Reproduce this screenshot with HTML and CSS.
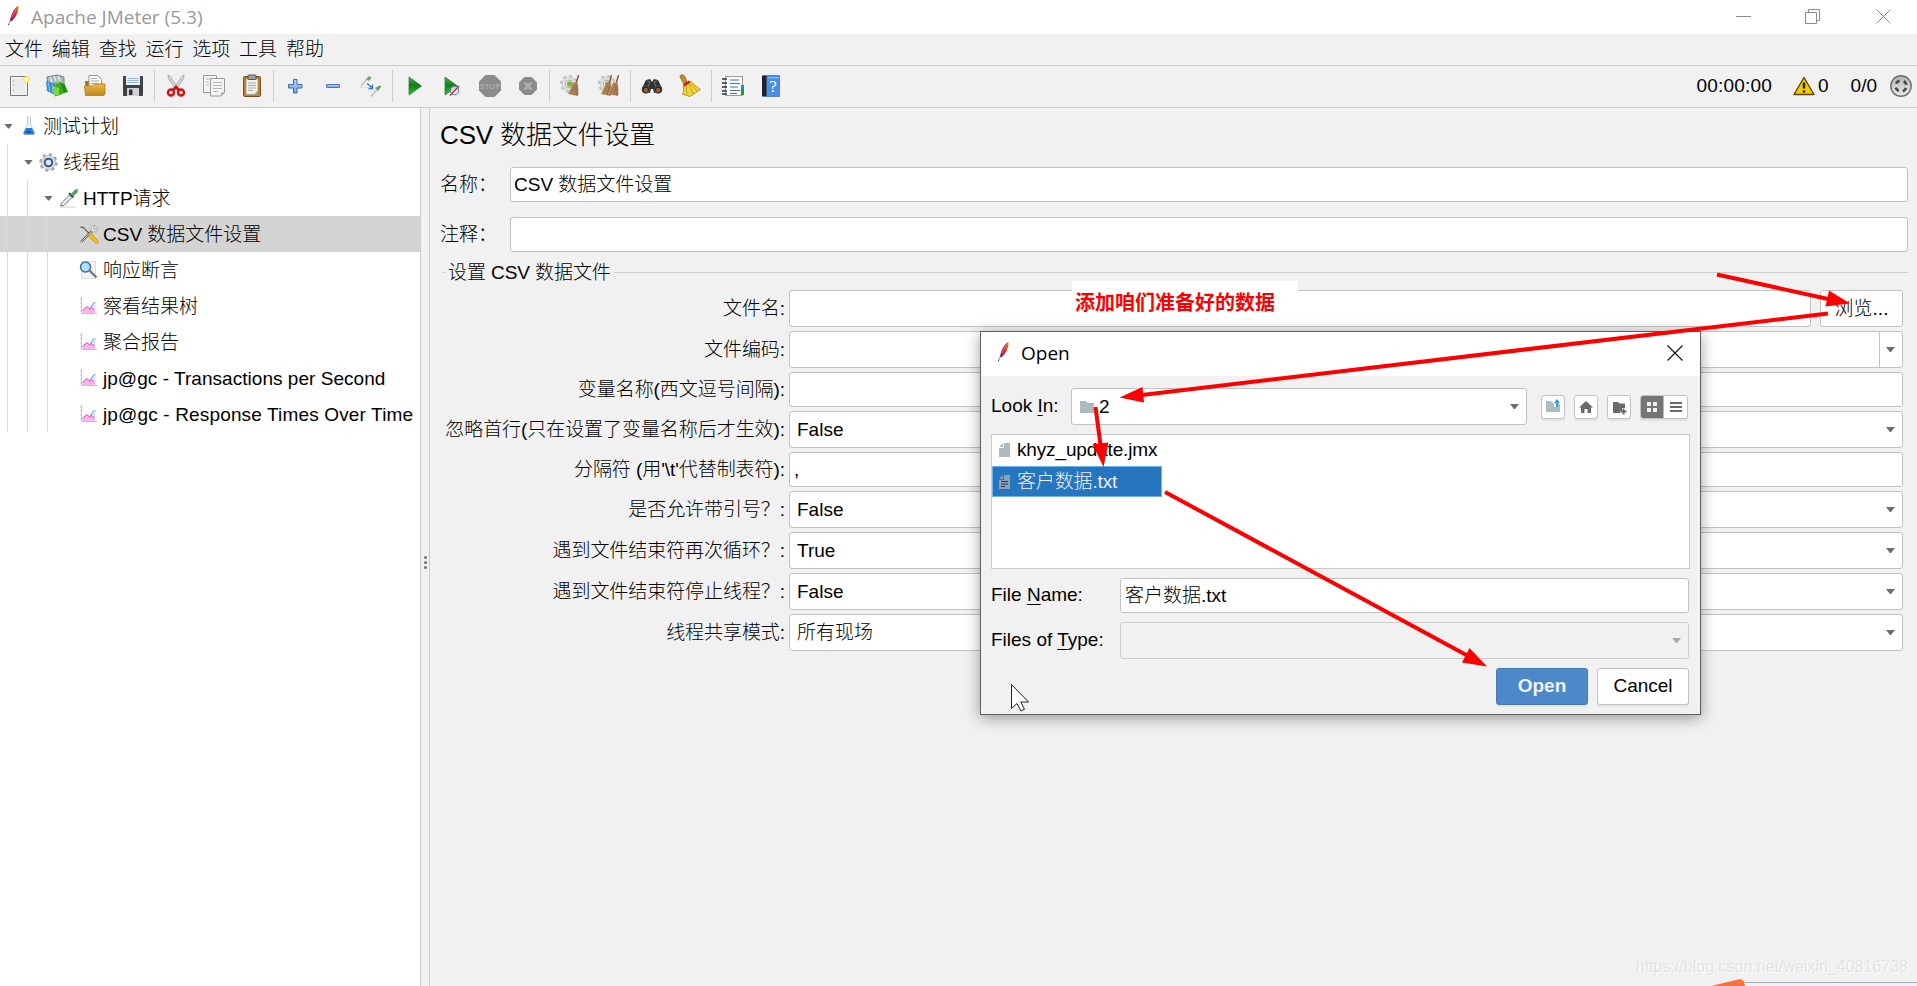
FILE: index.html
```html
<!DOCTYPE html>
<html lang="zh-CN">
<head>
<meta charset="utf-8">
<title>Apache JMeter (5.3)</title>
<link rel="stylesheet" href="styles.css">
</head>
<body>
<svg class="defs" width="0" height="0">
  <defs>
    <linearGradient id="gFeather" x1="1" y1="0" x2="0" y2="1"><stop offset="0" stop-color="#f7a41d"/><stop offset=".25" stop-color="#e8542a"/><stop offset=".5" stop-color="#c9203c"/><stop offset="1" stop-color="#7a2a80"/></linearGradient>
    <linearGradient id="gGreen" x1="0" y1="0" x2="0" y2="1"><stop offset="0" stop-color="#4fae55"/><stop offset=".45" stop-color="#167c1c"/><stop offset="1" stop-color="#18d018"/></linearGradient>
    <linearGradient id="gBlue" x1="0" y1="0" x2="0" y2="1"><stop offset="0" stop-color="#b6d2f2"/><stop offset="1" stop-color="#7aa6de"/></linearGradient>
    <linearGradient id="gGold" x1="0" y1="0" x2="0" y2="1"><stop offset="0" stop-color="#e9b84a"/><stop offset="1" stop-color="#c08818"/></linearGradient>
    <linearGradient id="gBall" x1="0" y1="0" x2="0" y2="1"><stop offset="0" stop-color="#b4b4b4"/><stop offset="1" stop-color="#e8e8e8"/></linearGradient>
    <symbol id="feather" viewBox="0 0 14 22"><path d="M11.500 0.500C8 2 4.500 8 3 15L4.500 16.500C8.500 12.500 12 7 11.500 0.500Z" fill="url(#gFeather)"/><path d="M3.400 15.500L.8 21" stroke="#6b2a6e" stroke-width="1" stroke-dasharray="2 1" fill="none"/><path d="M5 12l2-4 2-3" stroke="#f0a0a0" stroke-width=".6" fill="none"/></symbol>
    <symbol id="chart" viewBox="0 0 20 20"><path d="M2.500 1v16.500H18" stroke="#c4c4c4" fill="none"/><path d="M1 3h2M1 7h2M1 11h2M1 15h2" stroke="#c8c8c8"/><path d="M9 12c3 0 2-6 7.500-6V16H9z" fill="#d4e4fa"/><path d="M11 12c3-1 1-5 5.500-5.500" stroke="#7ba6e0" fill="none"/><path d="M3.500 17v-2.500L8 10.500l3.500 3.500 4.500-2v5z" fill="#f9b4f0"/><path d="M3.500 14.500L8 10.500l3 3 1.500-2 2.500 2.500" stroke="#c05a92" fill="none"/></symbol>
    <symbol id="gearclean" viewBox="0 0 24 24"><circle cx="10" cy="10" r="7.800" fill="none" stroke="#bfc3c1" stroke-width="2.600" stroke-dasharray="3.060 3.060"/><circle cx="10" cy="10" r="7" fill="#dfe2e0" stroke="#b8bcba" stroke-width=".6"/><circle cx="10" cy="10" r="3.800" fill="#f0f2ee" stroke="#999" stroke-width=".8"/><circle cx="10.500" cy="10" r="2.600" fill="#76b62c"/></symbol>
    <symbol id="brush" viewBox="0 0 12 22"><path d="M10.500 0L8 9" stroke="#8b5a36" stroke-width="1.500"/><path d="M5.500 7l4.500 1.500L10.500 20l-1 1L0 19z" fill="#b58a5e"/><path d="M7 9L3 19M8.500 10L6 20M9.500 12L8.500 20" stroke="#7d5430" stroke-width=".7"/></symbol>
  </defs>
</svg>

<div class="window">
  <header class="titlebar">
    <svg class="app-icon" width="14" height="22"><use href="#feather"/></svg>
    <span class="app-title">Apache JMeter (5.3)</span>
    <svg class="win-controls" width="160" height="18" fill="none" stroke="#8c8c8c"><path d="M0 8.500h15"/><path d="M69.500 4.500h11v11h-11zM72.500 4.500v-3h11v11h-3"/><path d="M140.500 1.500l14 14M154.500 1.500l-14 14"/></svg>
  </header>

  <nav class="menubar"><span>文件</span><span>编辑</span><span>查找</span><span>运行</span><span>选项</span><span>工具</span><span>帮助</span></nav>

  <div class="toolbar">
    <span class="tool"><svg viewBox="0 0 24 24"><path d="M3.500 2.500h17v19h-17z" fill="#f4f4f4" stroke="#777"/><path d="M5 4h14v16H5z" fill="#ececec"/><path d="M6.500 6v2M6.500 10v2M6.500 15v2" stroke="#bbb"/><circle cx="19.500" cy="5.500" r="3" fill="#fdf9a0" stroke="#f0e050"/></svg></span>
    <span class="tool"><svg viewBox="0 0 24 24"><path d="M2 3l10-2 7 2v7H3z" fill="#a9b8b8" stroke="#6e8486"/><path d="M5 3l2 5M9 2l2 5M13 2l2 5" stroke="#e8eeee" stroke-width="1.500"/><path d="M1 7l9 3v11l-8-4z" fill="#2b8fd0"/><path d="M3 8l2 9M7 10l1 9" stroke="#86cdf0"/><path d="M8 12l7-4 5 2v9l-10 3.500z" fill="#3fae1c"/><path d="M8 12l6 2v8l-5-1.500z" fill="#7cdb3a"/><path d="M15 9l5 2 3 7-4 1z" fill="#239010"/></svg></span>
    <span class="tool"><svg viewBox="0 0 24 24"><path d="M2 7h7l2 2h9v12H3z" fill="#a87615"/><path d="M6 1.500h9l3.500 4V13H6z" fill="#f7f7f7" stroke="#999"/><path d="M8 4.500h6M8 7h8M8 9.500h8" stroke="#aaa"/><path d="M1.500 12h8l2-2h10.500v10l-1.500 1.500h-18z" fill="url(#gGold)" stroke="#b27f16" stroke-width=".8"/></svg></span>
    <span class="tool"><svg viewBox="0 0 24 24"><rect x="2" y="2" width="20" height="20" rx="1" fill="#3e4246"/><path d="M5 2h14v9H5z" fill="#e8f0f8"/><path d="M6.500 4.500h11M6.500 6.500h11M6.500 8.500h11" stroke="#9db6d0"/><path d="M6 14h12v8H6z" fill="#cfd3d6"/><path d="M8 15.500h3.500V21H8z" fill="#333"/></svg></span>
    <i class="sep"></i>
    <span class="tool"><svg viewBox="0 0 24 24"><path d="M4 1.500c2 0 3 2 3.500 3.500L15 15l-2 1.500L5.500 6C4.500 4.500 4 3 4 1.500zM20 1.500c-2 0-3 2-3.500 3.500L9 15l2 1.500L18.500 6c1-1.500 1.500-3 1.500-4.500z" fill="#e4e6e6" stroke="#888" stroke-width=".8"/><circle cx="7" cy="18.500" r="3" fill="none" stroke="#d01414" stroke-width="2.500"/><circle cx="17" cy="18.500" r="3" fill="none" stroke="#d01414" stroke-width="2.500"/><path d="M9 16l3-3 3 3" fill="none" stroke="#d01414" stroke-width="2.500"/></svg></span>
    <span class="tool"><svg viewBox="0 0 24 24"><g fill="#f4f5f3" stroke="#9a9a98"><path d="M1.500 1.500h13v17h-13z"/><path d="M8.500 4.500h14v14l-3.500 3.500H8.500z"/></g><path d="M4 5h4M4 8h3M4 11h3M11 8.500h9M11 11.500h9M11 14.500h9M11 17.500h5" stroke="#b8bab6"/><path d="M22.500 18.500L19 22v-3.500z" fill="#aaa"/></svg></span>
    <span class="tool"><svg viewBox="0 0 24 24"><rect x="3.500" y="2.500" width="17" height="20" rx="1" fill="#c08224" stroke="#7a5012"/><path d="M6 5h12v15.500H6z" fill="#f1f1ee" stroke="#888" stroke-width=".6"/><rect x="8" y="1" width="8" height="4.500" rx="1" fill="#9c9f9a" stroke="#555"/><path d="M8 9h8M8 11.500h8M8 14h8M8 16.500h5" stroke="#aaa"/><path d="M18 16.500v4h-4z" fill="#999"/></svg></span>
    <i class="sep"></i>
    <span class="tool"><svg viewBox="0 0 24 24"><path d="M10.500 5.500h3.500v5h5v3.500h-5v5h-3.500v-5h-5v-3.500h5z" fill="url(#gBlue)" stroke="#3e6aac"/></svg></span>
    <span class="tool"><svg viewBox="0 0 24 24"><rect x="5.500" y="10.500" width="13" height="3" rx=".5" fill="url(#gBlue)" stroke="#4a74b4"/></svg></span>
    <span class="tool"><svg viewBox="0 0 24 24"><path d="M2 12L8 5" stroke="#c4c4c4" stroke-width="1.800"/><path d="M7 5l3-3 2.500 1.500L10 7z" fill="#6aa564"/><path d="M1 13.500h11" stroke="#ddd"/><path d="M12 22.500l6-7" stroke="#c4c4c4" stroke-width="1.800"/><path d="M16 14l4.500-2.500 2 1L19 17z" fill="#6aa564"/><path d="M8 9.500l5 4M13.500 10.500v4H9.500" stroke="#2f78d0" fill="none" stroke-width="1.300"/></svg></span>
    <i class="sep"></i>
    <span class="tool"><svg viewBox="0 0 24 24"><path d="M7 3l12.500 9L7 21z" fill="url(#gGreen)" stroke="#1d7a22" stroke-width=".7"/></svg></span>
    <span class="tool"><svg viewBox="0 0 24 24"><path d="M5 3l12.500 9L5 21z" fill="url(#gGreen)" stroke="#1d7a22" stroke-width=".7"/><circle cx="14.500" cy="16.500" r="4.300" fill="#dfe8f4" fill-opacity=".8" stroke="#4a7cb8"/><path d="M10 21.500l9-9.500" stroke="#d42020" stroke-width="1.300"/></svg></span>
    <span class="tool"><svg viewBox="0 0 24 24"><path d="M7.500 1h9L23 7.500v9L16.500 23h-9L1 16.500v-9z" fill="#8b8b8b"/><text x="12" y="15" class="stop-text">STOP</text></svg></span>
    <span class="tool"><svg viewBox="0 0 24 24"><path d="M8.500 3h7L21 8.500v7L15.500 21h-7L3 15.500v-7z" fill="#8b8b8b"/><path d="M8.500 8.500l7 7M15.500 8.500l-7 7" stroke="#b0b0b0" stroke-width="2.500"/></svg></span>
    <i class="sep"></i>
    <span class="tool"><svg viewBox="0 0 24 24"><use href="#gearclean" width="24" height="24"/><use href="#brush" x="9" y="1" width="12" height="22"/></svg></span>
    <span class="tool"><svg viewBox="0 0 24 24"><use href="#gearclean" width="24" height="24"/><use href="#brush" x="4" y="1" width="12" height="22"/><use href="#brush" x="11" y="1" width="12" height="22"/></svg></span>
    <i class="sep"></i>
    <span class="tool"><svg viewBox="0 0 24 24"><path d="M6 6l4-1 2 3 2-3 4 1 4 8-1 4-7 1-1-4h-2l-1 4-7-1-1-4z" fill="#2f3133"/><path d="M7 7l3 1-2 5M17 7l-3 1 2 5" stroke="#77797b" fill="none"/><circle cx="5.800" cy="15.500" r="3.800" fill="#222" stroke="#555"/><circle cx="18.200" cy="15.500" r="3.800" fill="#222" stroke="#555"/><circle cx="5.800" cy="16" r="2.200" fill="#a85a22"/><circle cx="18.200" cy="16" r="2.200" fill="#a85a22"/></svg></span>
    <span class="tool"><svg viewBox="0 0 24 24"><path d="M2 3c0-3 4-3 5 0l2 5-3 2z" fill="#c98a2a" stroke="#7c5210" stroke-width=".7"/><path d="M5 12l7-5 10.500 8.500L12 22.500 4 20c2-1 2-4 1-8z" fill="#f0d33a" stroke="#a88a10" stroke-width=".8"/><path d="M8 11l1 9M11 10l4 10M13 10l6 7" stroke="#b59617" stroke-width=".8"/><path d="M5 10.500l6-4 1.500 2-6 4z" fill="#d21a1a"/></svg></span>
    <i class="sep"></i>
    <span class="tool"><svg viewBox="0 0 24 24"><path d="M4.500 2.500h17v19h-17z" fill="#fcfcfc" stroke="#999"/><path d="M20 11h3v5h-3z" fill="#2680e8"/><path d="M20 16h3v5h-3z" fill="#1c9a28"/><path d="M1 5h5M1 9h5M1 13h5M1 17h5M1 20h5" stroke="#333" stroke-width="1.300"/><path d="M9 6h9M9 9.500h10M9 13h8M9 16.500h10M9 19.500h7" stroke="#3a72c4" stroke-width="1.100"/></svg></span>
    <span class="tool"><svg viewBox="0 0 24 24"><path d="M3.500 1.500h17v21h-17z" fill="#4a8ee4" stroke="#5a82b6"/><path d="M3 2h4.500v20H3z" fill="#1d222a"/><path d="M9 3h11v1.500H9z" fill="#84b4f0"/><text x="14" y="18" class="help-text">?</text></svg></span>
    <div class="status">
      <span class="clock">00:00:00</span>
      <svg class="warn" width="22" height="20" viewBox="0 0 22 20"><path d="M11 1.500L21 18.500H1z" fill="#f6c900" stroke="#5a4a08" stroke-width="1.400" stroke-linejoin="round"/><path d="M11 6.500v6" stroke="#2a2200" stroke-width="2.400"/><circle cx="11" cy="15.500" r="1.300" fill="#2a2200"/></svg>
      <span class="errors">0</span>
      <span class="threads">0/0</span>
      <svg class="ball" width="22" height="22" viewBox="0 0 22 22"><circle cx="11" cy="11" r="10.200" fill="url(#gBall)" stroke="#6c6c6c" stroke-width="1.400"/><circle cx="11" cy="11" r="5.500" fill="none" stroke="#454545" stroke-width="2.600" stroke-dasharray="4.320 4.320" stroke-dashoffset="-2.160"/></svg>
    </div>
  </div>

  <div class="workspace">
    <aside class="tree">
      <div class="node l0"><b class="caret"></b><svg viewBox="0 0 20 20"><path d="M8.500 1h3v7l4 8.500c0 1.500-1 2-2 2h-7c-1 0-2-.5-2-2l4-8.500z" fill="#eef4f8" stroke="#b9c4cc" stroke-width=".8"/><path d="M7 12h6l2.500 5c0 1-.8 1.500-1.500 1.500H6c-.8 0-1.500-.5-1.500-1.500z" fill="#2f80d8"/><path d="M5.500 16l5-1.500 3 3z" fill="#0f4ea8"/></svg><span>测试计划</span></div>
      <div class="node l1"><b class="caret"></b><svg viewBox="0 0 20 20"><circle cx="9.500" cy="10.500" r="8" fill="none" stroke="#a4a4a4" stroke-width="2.400" stroke-dasharray="3.140 3.140"/><circle cx="9.500" cy="10.500" r="7" fill="#e2e2e2" stroke="#a8a8a8" stroke-width=".8"/><circle cx="9.500" cy="10.500" r="3.800" fill="#dfe8f6" stroke="#34598f" stroke-width="2"/></svg><span>线程组</span></div>
      <div class="node l2"><b class="caret"></b><svg viewBox="0 0 20 20"><path d="M1.500 18l1-3 8-8 2.500 2.500-8 8z" fill="#e8eaea" stroke="#666" stroke-width=".9"/><path d="M10 5l4.500 4.500" stroke="#3a5a38" stroke-width="2"/><path d="M12 6l4-4.500 3-.5-.5 3.500-4 3.500z" fill="#5fa05a"/><path d="M1 19h16" stroke="#ccc"/></svg><span>HTTP请求</span></div>
      <div class="node l3 selected"><svg viewBox="0 0 20 20"><path d="M1.500 3l3 .5L17 17" stroke="#666" stroke-width="1.300" fill="none"/><path d="M2 18L14 6" stroke="#555" stroke-width="2.400"/><path d="M2 18L14 6" stroke="#ddd" stroke-width="1"/><path d="M18.500 3.500L16 6l-2-2 2-2.500c-3-.5-5 2-4 4.500l2 2c3 .5 5-2 4.500-4.500z" fill="#e8e8e8" stroke="#888" stroke-width=".6"/><path d="M11.500 11.500l6 6" stroke="#d79a06" stroke-width="4" stroke-linecap="round"/><path d="M11.500 11.500l6 6" stroke="#f8c820" stroke-width="2" stroke-linecap="round"/></svg><span>CSV 数据文件设置</span></div>
      <div class="node l3"><svg viewBox="0 0 20 20"><path d="M2.500 1.500h14v17h-14z" fill="#f3f3f3" stroke="#ddd"/><path d="M10.500 10.500l7 7" stroke="#777" stroke-width="2.400"/><circle cx="6.500" cy="7" r="5" fill="#b4dcf6" stroke="#3c6f9c" stroke-width="1.500"/></svg><span>响应断言</span></div>
      <div class="node l3"><svg><use href="#chart"/></svg><span>察看结果树</span></div>
      <div class="node l3"><svg><use href="#chart"/></svg><span>聚合报告</span></div>
      <div class="node l3 latin"><svg><use href="#chart"/></svg><span>jp@gc - Transactions per Second</span></div>
      <div class="node l3 latin wide"><svg><use href="#chart"/></svg><span>jp@gc - Response Times Over Time</span></div>
    </aside>
    <div class="splitter"><i></i><i></i><i></i></div>

    <main class="panel">
      <h1>CSV 数据文件设置</h1>
      <div class="meta-row"><label>名称：</label><div class="field">CSV 数据文件设置</div></div>
      <div class="meta-row"><label>注释：</label><div class="field"></div></div>
      <section class="group">
        <div class="legend"><i class="lead"></i><span>设置 CSV 数据文件</span><i class="rule"></i></div>
        <div class="row"><label>文件名:</label><div class="field"></div><div class="browse">浏览...</div></div>
        <div class="row"><label>文件编码:</label><div class="field editable"><i class="divider"></i><b class="caret"></b></div></div>
        <div class="row short"><label>变量名称(西文逗号间隔):</label><div class="field"></div></div>
        <div class="row"><label>忽略首行(只在设置了变量名称后才生效):</label><div class="field combo">False<b class="caret"></b></div></div>
        <div class="row short"><label>分隔符 (用'\t'代替制表符):</label><div class="field">,</div></div>
        <div class="row"><label>是否允许带引号？:</label><div class="field combo">False<b class="caret"></b></div></div>
        <div class="row"><label>遇到文件结束符再次循环？:</label><div class="field combo">True<b class="caret"></b></div></div>
        <div class="row"><label>遇到文件结束符停止线程？:</label><div class="field combo">False<b class="caret"></b></div></div>
        <div class="row"><label>线程共享模式:</label><div class="field combo">所有现场<b class="caret"></b></div></div>
      </section>
    </main>
  </div>

  <div class="note">添加咱们准备好的数据</div>

  <div class="dialog">
    <div class="dlg-title"><svg width="14" height="22"><use href="#feather"/></svg><span>Open</span><svg class="dlg-close" width="16" height="16"><path d="M.5.5l15 15M15.500.5l-15 15" stroke="#111" fill="none" stroke-width="1.100"/></svg></div>
    <div class="dlg-body">
      <div class="look">
        <label>Look <u>I</u>n:</label>
        <div class="field look-in"><svg width="14" height="12"><path d="M0 0h6l2 2h6v10H0z" fill="#aebac1"/></svg><span>2</span><b class="caret"></b></div>
        <span class="btn"><svg viewBox="0 0 22 22"><path d="M4 5h5l2 2h1v4h3V8h3v8H4z" fill="#aebac1"/><path d="M15 11V5" stroke="#2f9bd8" stroke-width="2"/><path d="M12 7L15 3l3 4z" fill="#2f9bd8"/></svg></span>
        <span class="btn"><svg viewBox="0 0 22 22"><path d="M11 5l7 6.500h-2V17h-3.500v-4h-3v4H6v-5.500H4z" fill="#6a6a6a"/></svg></span>
        <span class="btn"><svg viewBox="0 0 22 22"><path d="M5 6h5l1.500 1.500H17V12h-3v3h-2v2H5z" fill="#6a6a6a"/><path d="M15.500 12.500v6M12.500 15.500h6" stroke="#6a6a6a" stroke-width="2"/></svg></span>
        <span class="toggle"><svg viewBox="0 0 46 22"><path d="M0 0h22.500v22H0z" fill="#757575"/><path d="M6 6h4v4H6zM12 6h4v4h-4zM6 12h4v4H6zM12 12h4v4h-4z" fill="#f2f2f2"/><path d="M29 7h12M29 11h12M29 15h12" stroke="#6a6a6a" stroke-width="2"/></svg></span>
      </div>
      <div class="files">
        <div class="file"><svg width="11" height="14"><path d="M5 0h6v14H0V5h5zM4 0v4H0z" fill="#aebac1"/></svg><span>khyz_update.jmx</span></div>
        <div class="file picked"><svg width="11" height="14"><path d="M5 0h6v14H0V5h5zM4 0v4H0z" fill="#86a3bb"/><path d="M2 6.500h7M2 9h7M2 11.500h4" stroke="#30343c"/></svg><span>客户数据.txt</span></div>
      </div>
      <div class="dlg-row short"><label>File <u>N</u>ame:</label><div class="field">客户数据.txt</div></div>
      <div class="dlg-row"><label>Files of <u>T</u>ype:</label><div class="field disabled"><b class="caret"></b></div></div>
      <div class="actions"><span class="action primary">Open</span><span class="action">Cancel</span></div>
    </div>
  </div>

  <svg class="overlay" width="1917" height="986" viewBox="0 0 1917 986">
    <g stroke="#fe0000" stroke-width="4" fill="none"><path d="M1717 274.500L1828 299"/><path d="M1828 313.500L1142 395"/><path d="M1095.500 407L1100.500 445"/><path d="M1165 492L1470 657"/></g>
    <g fill="#fe0000"><path d="M1850 303.500L1825.500 306.500 1829 290.500z"/><path d="M1119.500 397.500L1142.500 387 1144 402.500z"/><path d="M1103.500 467L1092.500 444 1108.500 442.500z"/><path d="M1487 666.500L1462 662.500 1469.500 648z"/></g>
    <path d="M1011.500 684.500v24l5.500-5 4 7.500 3.500-1.800-3.800-7.200h7.800z" fill="#fff" stroke="#222"/>
    <path d="M1745 982.500h172" stroke="#a8a8b4"/><path d="M1711 986l28-6.800q4-.5 5 3l1 3.800z" fill="#f9703c"/>
  </svg>
  <div class="watermark">https://blog.csdn.net/weixin_40816738</div>
</div>
</body>
</html>
```

FILE: styles.css
```css
* { box-sizing: border-box; }
body {
  margin: 0;
  font: 19px/24px "Liberation Sans", "Noto Sans CJK SC", sans-serif;
  color: #000;
  background: #f1f1f1;
}
svg { display: block; flex: none; }
.defs { position: absolute; }
.window {
  position: relative;
  display: flex;
  flex-direction: column;
  width: 1917px;
  height: 986px;
  overflow: hidden;
  white-space: nowrap;
  font-weight: 300;
}
.titlebar { display: flex; align-items: center; height: 34px; padding-left: 7px; background: #fff; }
.app-icon { margin-top: -2px; }
.app-title { margin-left: 10px; font: 19px/24px "Open Sans", sans-serif; color: #999; }
.win-controls { margin-left: auto; margin-right: 21px; }
.menubar { display: flex; gap: 8.8px; height: 32px; padding: 4px 5px 0; border-bottom: 1px solid #cdcdcd; }
.toolbar { display: flex; align-items: center; height: 42px; padding-bottom: 1px; border-bottom: 1px solid #cdcdcd; }
.tool { display: flex; justify-content: center; width: 38px; }
.tool svg { width: 24px; height: 24px; }
.sep { width: 1px; height: 32px; margin: 0 2px; background: #cdcdcd; }
.stop-text { font: bold 7.5px "Liberation Sans", sans-serif; text-anchor: middle; fill: #aaa; }
.help-text { font: 17px "Liberation Serif", serif; text-anchor: middle; fill: #fff; }
.status { display: flex; align-items: center; margin-left: auto; padding-right: 5px; }
.clock { letter-spacing: .2px; }
.warn { margin-left: 21px; }
.errors { margin-left: 3px; }
.threads { margin-left: 22px; }
.ball { margin-left: 13px; }

.workspace { display: flex; flex: 1; min-height: 0; }
.tree { width: 420px; background: #fff; }
.node { display: flex; align-items: center; height: 36px; }
.node > svg { width: 20px; height: 20px; margin-right: 4px; }
.node > span { padding-top: 2px; }
.latin > span { padding-top: 1px; letter-spacing: .04px; }
.wide > span { letter-spacing: .15px; }
.caret { flex: none; width: 9px; height: 5px; background: #6e6e6e; clip-path: polygon(0 0, 100% 0, 56% 100%, 44% 100%); }
.node .caret { margin-right: 6px; }
.l0 { padding-left: 4px; }
.l1 { padding-left: 24px; background: linear-gradient(#dadada, #dadada) 7px 0 / 1px 100% no-repeat; }
.l2 { padding-left: 44px; background: linear-gradient(#dadada, #dadada) 7px 0 / 1px 100% no-repeat, linear-gradient(#dadada, #dadada) 27px 0 / 1px 100% no-repeat; }
.l3 { padding-left: 79px; background: linear-gradient(#dadada, #dadada) 7px 0 / 1px 100% no-repeat, linear-gradient(#dadada, #dadada) 27px 0 / 1px 100% no-repeat, linear-gradient(#dadada, #dadada) 47px 0 / 1px 100% no-repeat; }
.selected { background-color: #d4d4d4; }
.splitter {
  display: flex;
  flex-direction: column;
  align-items: center;
  gap: 2px;
  width: 10px;
  padding-top: 448px;
  border: solid #cdcdcd;
  border-width: 0 1px;
}
.splitter i { width: 3px; height: 3px; border-radius: 50%; background: #6e6e6e; }

.panel { flex: 1; padding: 11px 9px 0 10px; }
h1 { margin: 0 0 16px; font-size: 26px; line-height: 32px; font-weight: 300; letter-spacing: -.15px; }
.field { display: flex; align-items: center; height: 100%; background: #fff; border: 1px solid #c2c2c2; border-radius: 3px; padding-left: 4px; }
.meta-row { display: flex; align-items: center; height: 35px; margin-bottom: 15px; }
.meta-row label { width: 70px; }
.meta-row .field { flex: 1; padding-left: 3px; }
.legend { display: flex; align-items: center; height: 24px; margin: -7px 0 6px 2px; }
.legend .lead { width: 3px; height: 1px; background: #cdcdcd; }
.legend span { margin: 0 3px; padding-top: 1px; letter-spacing: -.08px; }
.legend .rule { flex: 1; height: 1px; background: #cdcdcd; }
.row { display: flex; align-items: center; height: 37px; margin-bottom: 4px; padding-right: 5px; }
.row.short, .dlg-row.short { height: 35px; }
.row label { width: 345px; margin-right: 4px; text-align: right; letter-spacing: -.06px; }
.row .field { flex: 1; padding-right: 7px; }
.row .combo { padding-left: 7px; }
.combo .caret { margin-left: auto; }
.editable { justify-content: flex-end; }
.divider { width: 1px; height: 100%; margin-right: 6px; background: #c2c2c2; }
.browse { display: flex; align-items: center; justify-content: center; width: 83px; height: 37px; margin-left: 9px; background: #fff; border: 1px solid #c2c2c2; border-radius: 3px; }

.note { position: absolute; left: 1072px; top: 281px; width: 226px; height: 43px; padding-left: 3px; background: #fff; color: #fe0000; font: bold 20px/41px "Noto Sans CJK SC", sans-serif; }

.dialog {
  position: absolute;
  left: 980px;
  top: 331px;
  width: 721px;
  height: 384px;
  background: #f1f1f1;
  border: 1px solid #5e5e60;
  box-shadow: 0 3px 14px rgba(0, 0, 0, .38);
}
.dlg-title { display: flex; align-items: center; height: 44px; padding: 0 17px 2px 16px; background: #fff; font: 19px/24px "Open Sans", sans-serif; }
.dlg-title span { margin-left: 10px; }
.dlg-title > svg { margin-bottom: 3px; }
.dlg-title > .dlg-close { margin-left: auto; margin-bottom: 0; }
.dlg-body { padding: 12px 11px 0 10px; }
u { text-underline-offset: 3px; text-decoration-thickness: 1px; }
.look { display: flex; align-items: center; height: 37px; }
.look label { width: 80px; padding-bottom: 1px; }
.look .field { width: 456px; padding: 0 7px 0 8px; margin-right: 14px; }
.look .field span { margin-left: 5px; }
.look .caret { margin-left: auto; }
.btn, .toggle { height: 24px; background: #fff; border: 1px solid #c2c2c2; border-radius: 3px; box-shadow: 0 2px 0 #e2e2e2; overflow: hidden; }
.btn { flex: none; width: 24px; margin-right: 9px; }
.btn svg { width: 22px; height: 22px; }
.toggle { flex: none; width: 48px; }
.toggle svg { width: 46px; height: 22px; }
.files { height: 135px; margin: 9px -1px 0 0; background: #fff; border: 1px solid #c9c9c9; }
.file { display: flex; align-items: center; height: 31px; padding: 0 0 1px 7px; }
.file span { margin-left: 7px; letter-spacing: -.15px; }
.picked { width: 170px; padding: 0 0 0 6px; background: #2675bf; border: 1px solid #6fb2f0; color: #eee; }
.dlg-row { display: flex; align-items: center; height: 37px; margin-top: 9px; }
.dlg-row label { width: 129px; padding-bottom: 1px; }
.dlg-row .field { flex: 1; padding-right: 7px; }
.dlg-row .disabled { justify-content: flex-end; background: #f1f1f1; border-color: #cdcdcd; }
.disabled .caret { background: #ababab; }
.actions { display: flex; justify-content: flex-end; gap: 9px; margin-top: 9px; }
.action { width: 92px; height: 37px; line-height: 34px; text-align: center; background: #fff; border: 1px solid #c2c2c2; border-radius: 3px; box-shadow: 0 2px 0 #e4e4e4; }
.primary { background: #4d89c9; border-color: #447ab8; color: #f1f1f1; font-weight: bold; }

.overlay { position: absolute; left: 0; top: 0; }
.watermark { position: absolute; right: 9px; top: 956px; font-size: 16px; line-height: 22px; color: #e2e2e2; text-shadow: 1px 1px 0 #fff; }
```
